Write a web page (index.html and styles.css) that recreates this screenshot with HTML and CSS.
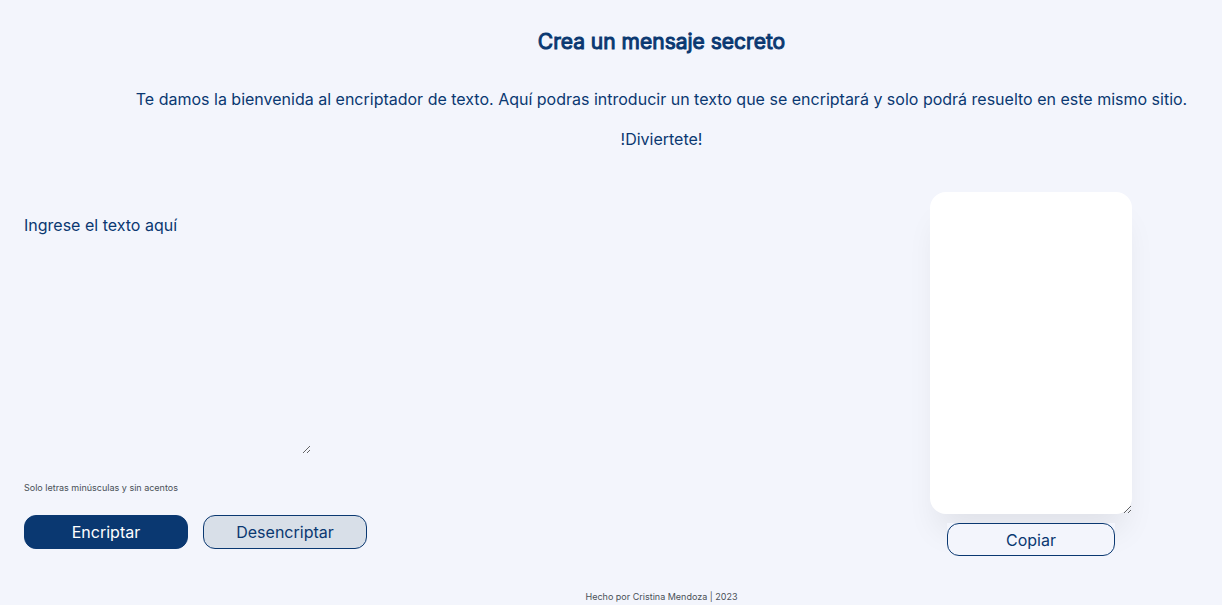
FILE: index.html
```html
<!DOCTYPE html>
<html lang="es">
<head>
<meta charset="utf-8">
<meta name="viewport" content="width=device-width, initial-scale=1">
<title>Encriptador de texto</title>
<link rel="stylesheet" href="styles.css">
</head>
<body>
<header class="intro">
  <h1 class="title">Crea un mensaje secreto</h1>
  <p class="lead">Te damos la bienvenida al encriptador de texto. Aquí podras introducir un texto que se encriptará y solo podrá resuelto en este mismo sitio.</p>
  <p class="lead">!Diviertete!</p>
</header>
<main class="workspace">
  <section class="entry">
    <textarea class="source" aria-label="Texto" placeholder="Ingrese el texto aquí"></textarea>
    <p class="hint">Solo letras minúsculas y sin acentos</p>
    <div class="actions">
      <button class="btn btn-primary" type="button">Encriptar</button>
      <button class="btn btn-secondary" type="button">Desencriptar</button>
    </div>
  </section>
  <section class="output">
    <textarea class="result" aria-label="Resultado"></textarea>
    <div class="copy-row">
      <button class="btn btn-copy" type="button">Copiar</button>
    </div>
  </section>
</main>
<footer class="footer">Hecho por Cristina Mendoza | 2023</footer>
</body>
</html>
```
FILE: styles.css
```css
* {
  box-sizing: border-box;
}

body {
  margin: 0;
  background: #f3f5fc;
  color: #0a3871;
  font-family: Inter, "Liberation Sans", sans-serif;
  font-size: 16px;
}

.intro {
  padding: 28px 0 0 101px;
  text-align: center;
}

.title {
  margin: 0 0 31px;
  font-size: 21px;
  line-height: 28px;
  font-weight: 400;
  -webkit-text-stroke: 1px #0a3871;
}

.lead {
  margin: 0 0 16px;
  line-height: 24px;
}

.workspace {
  display: flex;
  justify-content: space-between;
  padding: 25px 90px 0 24px;
}

.entry {
  padding-top: 23px;
}

.source,
.result {
  display: block;
  border: 0;
  outline: 0;
  color: inherit;
  font: inherit;
  resize: both;
}

.source {
  width: 287px;
  height: 239px;
  padding: 0;
  background: transparent;
}

.source::placeholder {
  color: #0a3871;
  opacity: 1;
}

.hint {
  margin: 26px 0 19px;
  color: #495057;
  font-size: 9px;
  line-height: 16px;
}

.actions {
  display: flex;
  gap: 15px;
}

.btn {
  display: block;
  width: 164px;
  height: 34px;
  padding: 0;
  border: 1px solid #0a3871;
  border-radius: 12px;
  background: transparent;
  color: #0a3871;
  font: inherit;
}

.btn-primary {
  background: #0a3871;
  color: #fff;
}

.btn-secondary {
  background: #d8dfe8;
}

.output {
  display: flex;
  flex-direction: column;
  align-items: center;
  gap: 9px;
}

.result {
  width: 202px;
  height: 322px;
  padding: 16px;
  border-radius: 16px;
  background: #fff;
  box-shadow: 0 24px 32px -8px rgba(0, 0, 0, 0.08);
}

.copy-row {
  background: #f3f5fc;
}

.btn-copy {
  width: 168px;
  height: 33px;
}

.footer {
  padding: 33px 0 0 101px;
  color: #495057;
  font-size: 9px;
  line-height: 16px;
  text-align: center;
}
```
